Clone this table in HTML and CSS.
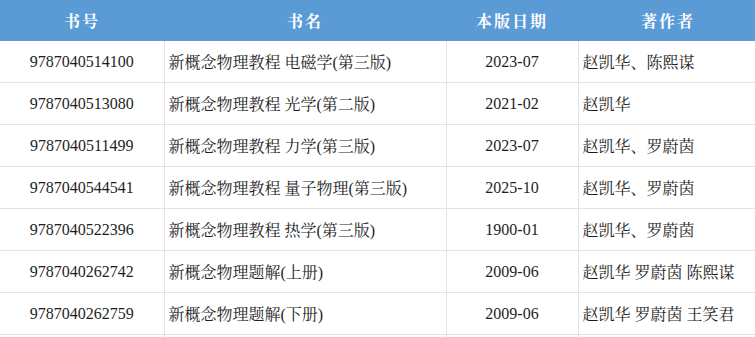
FILE: index.html
```html
<!DOCTYPE html>
<html lang="zh-CN">
<head>
<meta charset="utf-8">
<title>新概念物理教程</title>
<link rel="stylesheet" href="styles.css">
</head>
<body>
<table class="books">
  <colgroup>
    <col class="c-isbn">
    <col class="c-title">
    <col class="c-date">
    <col class="c-author">
  </colgroup>
  <thead>
    <tr>
      <th>书号</th>
      <th>书名</th>
      <th>本版日期</th>
      <th>著作者</th>
    </tr>
  </thead>
  <tbody>
    <tr><td class="num">9787040514100</td><td class="txt">新概念物理教程 电磁学(第三版)</td><td class="num">2023-07</td><td class="txt">赵凯华、陈熙谋</td></tr>
    <tr><td class="num">9787040513080</td><td class="txt">新概念物理教程 光学(第二版)</td><td class="num">2021-02</td><td class="txt">赵凯华</td></tr>
    <tr><td class="num">9787040511499</td><td class="txt">新概念物理教程 力学(第三版)</td><td class="num">2023-07</td><td class="txt">赵凯华、罗蔚茵</td></tr>
    <tr><td class="num">9787040544541</td><td class="txt">新概念物理教程 量子物理(第三版)</td><td class="num">2025-10</td><td class="txt">赵凯华、罗蔚茵</td></tr>
    <tr><td class="num">9787040522396</td><td class="txt">新概念物理教程 热学(第三版)</td><td class="num">1900-01</td><td class="txt">赵凯华、罗蔚茵</td></tr>
    <tr><td class="num">9787040262742</td><td class="txt">新概念物理题解(上册)</td><td class="num">2009-06</td><td class="txt">赵凯华 罗蔚茵 陈熙谋</td></tr>
    <tr><td class="num">9787040262759</td><td class="txt">新概念物理题解(下册)</td><td class="num">2009-06</td><td class="txt">赵凯华 罗蔚茵 王笑君</td></tr>
    <tr><td class="num"></td><td class="txt"></td><td class="num"></td><td class="txt"></td></tr>
  </tbody>
</table>
</body>
</html>
```
FILE: styles.css
```css
html, body {
  margin: 0;
  padding: 0;
  background: #ffffff;
}

body {
  font-family: "Liberation Serif", "Noto Serif CJK SC", "Noto Sans CJK SC", serif;
  font-size: 16px;
  color: #1e1e1e;
}

.books {
  width: 758px;
  table-layout: fixed;
  border-collapse: collapse;
  border-spacing: 0;
}

.c-isbn { width: 164px; }
.c-title { width: 282px; }
.c-date { width: 132px; }
.c-author { width: 180px; }

.books th {
  height: 41px;
  padding: 0;
  background: #5b9bd5;
  color: #ffffff;
  font-weight: bold;
  font-size: 16px;
  letter-spacing: 2px;
  text-align: center;
  vertical-align: middle;
  border: none;
}

.books td {
  height: 41px;
  padding: 0 4px;
  border-bottom: 1px solid #e3e3e3;
  border-right: 1px solid #e3e3e3;
  vertical-align: middle;
  white-space: nowrap;
  overflow: hidden;
}

.books td:last-child {
  border-right: none;
}

.books td.num {
  text-align: center;
}

.books td.txt {
  text-align: left;
}
```
